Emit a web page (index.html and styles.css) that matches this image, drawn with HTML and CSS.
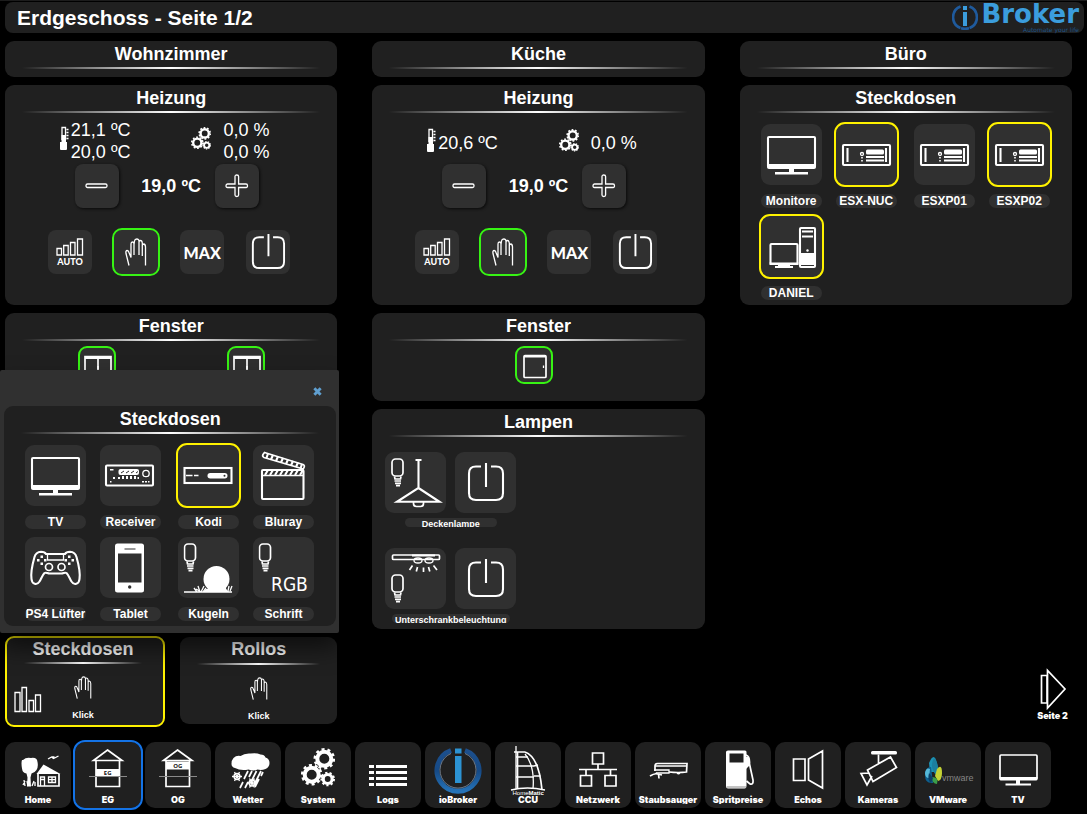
FILE: index.html
```html
<!DOCTYPE html>
<html lang="de">
<head>
<meta charset="utf-8">
<meta name="viewport" content="width=device-width, initial-scale=1">
<title>Erdgeschoss - Seite 1/2</title>
<link rel="stylesheet" href="styles.css">
</head>
<body>
<svg class="sprite" aria-hidden="true">
  <defs>
    <linearGradient id="ring" x1="0" y1="0" x2="0" y2="1"><stop offset="0" stop-color="#1c4f8c"/><stop offset=".5" stop-color="#164a86"/><stop offset="1" stop-color="#2573b8"/></linearGradient>
    <symbol id="tv" viewBox="0 0 61 61"><rect x="7" y="13" width="47" height="30" rx="1" class="l2"/><path class="f" d="M6 40h49v3q0 2-2 2H8q-2 0-2-2zM28 44h5v5h-5zM14 48h33v2.600H14z"/></symbol>
    <symbol id="server" viewBox="0 0 61 61"><rect x="7" y="21" width="47" height="20" rx="1" class="l2"/><path class="l2" d="M11.500 24v14M50 24v14"/><circle cx="26" cy="30" r="1.500" class="l1"/><path class="f" d="M25.200 33h1.600v1.600h-1.600zM25.200 36h1.600v1.600h-1.600z"/><rect class="f" x="30" y="25.500" width="18" height="5" rx="1.500"/><path class="f" d="M30 32h18v2H30zM30 35.500h18v2H30z"/></symbol>
    <symbol id="pc" viewBox="0 0 61 61"><rect x="9.500" y="28" width="27" height="20" rx="1" class="l2"/><path class="f" d="M8.500 46.500h29v2.500h-29zM17 49h12v1h3v2H14v-2h3z"/><rect x="39" y="12" width="15" height="39" rx="1" class="l2"/><path class="l2" d="M41 15.500h11M41 20.500h11"/><circle class="f" cx="46.500" cy="34.500" r="1.200"/><path class="f" d="M40 37h13v12H40z"/></symbol>
    <symbol id="receiver" viewBox="0 0 61 61"><rect x="6" y="20.500" width="47" height="20" rx="1" class="l2"/><rect class="f" x="18.500" y="24" width="20.500" height="6" rx="2"/><path class="d1" d="M21 28l3-2M26 28l3-2M31 28l3-2M36 28l2-1.500"/><circle cx="46" cy="28.500" r="3.200" class="l1"/><path class="f" d="M10 24h3.500v1.500H10zM13 32h2v2h-2zM18 32h2v2h-2zM22 31h2v3h-2zM26 31h2v3h-2zM30 31h2v3h-2zM34 31h2v3h-2zM37.500 32h1.500v2h-1.500zM10 36h1.500v1.500H10zM42 36h2v1.500h-2zM45 36h2v1.500h-2zM48 36h1.500v1.500H48z"/></symbol>
    <symbol id="kodi" viewBox="0 0 61 61"><rect x="6.500" y="23" width="47" height="15" class="l2"/><path class="l15" d="M8 30.500h6.500M16 30.500h4.500"/><rect class="f" x="29.500" y="28" width="20" height="5.500" rx="2.700"/><circle cx="46.500" cy="30.700" r="1" fill="#303030"/></symbol>
    <symbol id="clapper" viewBox="0 0 61 61"><rect x="9" y="25" width="41.500" height="29" rx="1" class="l2"/><path class="l15" d="M10 30.500h40"/><path class="l2" d="M12 30l3-5M17 30l3-5M22 30l3-5M27 30l3-5M32 30l3-5M37 30l3-5M42 30l3-5M47 30l3-5"/><path class="l15" d="M11.500 7.500 50 19.500q2 1 1 3l-.7 1.500L11 12.500q-2-1-1-3z"/><path class="l2" d="M15 8.500 13.500 13M20 10l-2 4.500M25 11.500 23 16M30 13l-2 4.500M35 14.500 33 19M40 16l-2 4.500M45 17.500 43 22M49 19l-1.500 4.500"/></symbol>
    <symbol id="pad" viewBox="0 0 61 61"><path class="l2" d="M16 14.800C12 15 10.500 16.500 9.500 20 7.500 27 5.500 35 6.500 42c.5 5.500 5.500 6.500 8 2.500 2-3.500 3-6.500 5-8.500 1.500-1 3 .5 5 .5h12c2 0 3.500-1.500 5-.5 2 2 3 5 5 8.500 2.500 4 7.500 3 8-2.500 1-7-1-15-3-22-1-3.500-2.500-5-6.500-5.200-2 0-4 .2-5 2.200H21c-1-2-3-2.200-5-2.200z"/><path class="l1" d="M22.500 17v6h16v-6"/><circle cx="24" cy="30" r="3.500" class="l15"/><circle cx="36.500" cy="30" r="3.500" class="l15"/><path class="f" d="M15.500 18.500h2.500v2.500h-2.500zM12 22h2.500v2.500H12zM19 22h2.500v2.500H19zM15.500 25.500h2.500v2.500h-2.500zM43 18.500h2.500v2.500H43zM39.500 22h2.500v2.500h-2.500zM46.500 22h2.500v2.500h-2.500zM43 25.500h2.500v2.500H43z"/></symbol>
    <symbol id="tablet" viewBox="0 0 61 61"><rect class="f" x="15" y="6.500" width="29" height="49" rx="2.500"/><path fill="#303030" d="M18 16.500h23.500v29H18zM24.500 11.500h11v1h-11z"/><circle cx="29.700" cy="50" r="1.700" fill="#303030"/></symbol>
    <symbol id="bulb" viewBox="0 0 14 30"><rect x="1" y="1" width="11" height="17" rx="3.500" class="l15"/><path class="l15" d="M3.500 18.500 4 21h5.500l.5-2.500M3.500 23h6.500M4 25.300h6M5 27.600h4"/></symbol>
    <symbol id="sphere" viewBox="0 0 61 61"><use href="#bulb" x="5.500" y="6" width="14" height="30"/><circle class="f" cx="38.500" cy="42" r="13"/><path class="l1" d="M6 55h48M16 51l3 4M20 49l2 6M26 49l-3 6M28 51l-3 4M18 52l5 3M50 54l1-5M52 54l2-5M48 54l-1-4"/><path class="f" d="M28 52h20l3 3H25z"/></symbol>
    <symbol id="rgb" viewBox="0 0 61 61"><use href="#bulb" x="5.500" y="6" width="14" height="30"/><text x="18" y="54" class="rgb-text">RGB</text></symbol>
    <symbol id="pendant" viewBox="0 0 61 61"><use href="#bulb" x="6" y="6" width="14" height="30"/><path class="l2" d="M30.500 8h6M33.500 8v28L12 49.800h42.500L33.500 36"/><path class="l15" d="M28.500 50v1.500q0 3 3 3h4q3 0 3-3V50"/></symbol>
    <symbol id="cabinet" viewBox="0 0 61 61"><rect x="7.500" y="7" width="47" height="4.500" rx="1" class="l15"/><path class="f" d="M27 6.500h23v2H27z"/><ellipse cx="33" cy="12.500" rx="4" ry="2.500" class="l1"/><ellipse cx="44" cy="12.500" rx="4" ry="2.500" class="l1"/><path class="l15" d="M27.500 17.500l-3 4.500M32.500 19l-1.200 4.500M38.500 19.500V24M43.500 19l1.300 4.500M48.500 17.500l3.500 4.500"/><use href="#bulb" x="6" y="26" width="14" height="30"/></symbol>
    <symbol id="power" viewBox="0 0 61 61"><path class="l2" d="M26 14.500h-5q-7 0-7 7V41q0 7 7 7h20q7 0 7-7V21.500q0-7-7-7h-5M31 11v24"/></symbol>
    <symbol id="hand" viewBox="0 0 22 28"><path class="l1" d="M4 27.500 1 15.500q-.5-3 1.200-3 1.300 0 2 2.500L6 19.500V6q0-2 1.500-2T9 6v11M9 6.500 9.500 3q.3-2 2.300-2T14 3v14M14 4.500q0-2 1.500-2T17.300 5v13M17.300 8q0-2 1.400-2 1.800.3 1.800 3v18.500"/></symbol>
    <symbol id="minus" viewBox="0 0 24 24"><rect x="1" y="10" width="21" height="3.500" rx="1.500" class="l1"/></symbol>
    <symbol id="plus" viewBox="0 0 24 24"><path class="l1" d="M10 10V2.500q0-1.500 1.800-1.500t1.800 1.500V10H21q1.500 0 1.500 1.800T21 13.500h-7.400V21q0 1.500-1.800 1.500T10 21v-7.500H2.500Q1 13.500 1 11.800T2.500 10z"/></symbol>
    <symbol id="auto" viewBox="0 0 44 44"><path class="l1" d="M9 18.500h4.500V25H9zM15.700 15.500h4.500V25h-4.500zM22.500 12.500h4.500V25h-4.500zM29.500 9h5v16h-5z"/><text x="22" y="35" class="auto-text">AUTO</text></symbol>
    <symbol id="thermo" viewBox="0 0 9 24"><path class="l1" d="M2 14V1.500h3.500V14M6.500 3.500h2M6.500 6.500h2M6.500 9.500h2M6.500 12.500h2"/><path class="f" d="M1.500 9h4.500v7h1v7q0 1-1 1H1q-1 0-1-1v-7h1.500z"/></symbol>
    <symbol id="gears" viewBox="0 0 34 39"><g class="gear"><circle cx="23.300" cy="10.800" r="7" stroke-width="4"/><circle cx="23.300" cy="10.800" r="9.500" stroke-width="2.600" stroke-dasharray="2.980"/><circle cx="10.700" cy="26.700" r="7" stroke-width="4"/><circle cx="10.700" cy="26.700" r="9.500" stroke-width="2.600" stroke-dasharray="2.980"/><circle cx="26.700" cy="31" r="4.500" stroke-width="3.200"/><circle cx="26.700" cy="31" r="6.300" stroke-width="2" stroke-dasharray="2.200"/></g></symbol>
    <symbol id="win1" viewBox="0 0 34 34"><rect x="7" y="7.500" width="22" height="22" rx="1" class="l15"/><path class="f" d="M7 7h22v2.500H7z"/><path class="l1" d="M26.500 17.500v2.500"/></symbol>
    <symbol id="win2" viewBox="0 0 34 34"><path class="l15" d="M5 29.500V8.500h26v21zM18 10v19"/><path class="f" d="M5 8h26v3H5zM17 18h2v3h-2z"/></symbol>
    <symbol id="bars" viewBox="0 0 28 27"><path class="l1" d="M1 6.500h5V25.500H1zM8 1.500h4.500v24H8zM15 14.500h4.500v11H15zM21.500 9h5v16.500h-5z"/></symbol>
    <symbol id="n-home" viewBox="0 0 66 53"><path class="f" d="M18 18q3-3 8-2 6-1 6.500 4 1 5-1 8-2 3-5 3.500l-1 4 .5 9h-4l.5-9-1-4q-4-.5-4.500-5-1-6 0-8.500z"/><path class="l1" d="M18 43l2-4M20 44l-1-6M23 44l-1-5M27 44l2-5M30 44v-4"/><path class="f" d="M31.500 32 38.500 22.500 55.500 32z"/><path class="l15" d="M33 31.500v12.500h21V32"/><path class="l1" d="M35.500 44v-9h4v9M36 37.500h3M43.500 35h7v5.500h-7zM47 35v5.500M43.500 37.700h7M43 17l3.500-2 2 1.500 5-2.500M46.500 15h3"/></symbol>
    <symbol id="n-eg" viewBox="0 0 66 53"><path class="l15" d="M32.500 8 47 18.500H18.500zM21 18.500v26h23.500v-26"/><path class="f" d="M21 27h23.500v7.500H21z"/><path class="g1" d="M14 34.500h38"/><text x="32.700" y="33.300" class="floor-text">EG</text></symbol>
    <symbol id="n-og" viewBox="0 0 66 53"><path class="l15" d="M32.500 8 47 18.500H18.500zM21 18.500v26h23.500v-26"/><path class="f" d="M21 19.500h23.500v8H21z"/><path class="g1" d="M14 34.500h38"/><text x="32.700" y="26" class="floor-text">OG</text></symbol>
    <symbol id="n-wetter" viewBox="0 0 66 53"><path class="f" d="M20 26q-3.500-1-3.500-4 0-4 2-6 3-3 7-2 4-3 10-2.500 6-1 10 1 4 0 5 3 4 1 4 5.500 0 4-4 6-4 1.500-8 .5-4 2-9 0-8 1.500-13.500-1.500z"/><path class="l15" d="M33 29l-4 8M37 29l-3 6M41.500 29l-6 12M46 29l-7 14M44 37l-4 8M28 40l-3 6M33 40l-3 6M48 30l-2 4"/><g class="l1"><circle cx="22" cy="34.500" r="3"/><path d="M17 34.500h10M19.500 30l5 9M24.500 30l-5 9"/><circle cx="37" cy="41" r="3"/><path d="M32 41h10M34.500 36.500l5 9M39.500 36.500l-5 9"/></g></symbol>
    <symbol id="n-system" viewBox="0 0 66 53"><use href="#gears" x="16" y="6" width="34" height="39"/></symbol>
    <symbol id="n-logs" viewBox="0 0 66 53"><path class="f" d="M14 23h5v3h-5zM14 29h5v3h-5zM14 35h5v3h-5zM14 41h5v3h-5zM21 23h31v3H21zM21 29h31v3H21zM21 35h31v3H21zM21 41h31v3H21z"/></symbol>
    <symbol id="n-iobroker" viewBox="0 0 66 53"><path fill="none" stroke="url(#ring)" stroke-width="5" d="M26 8.500a21 21 0 1 0 14 0"/><path fill="none" stroke="#9fb4cc" stroke-width=".6" d="M40 11.500a18 18 0 1 1-14 0"/><path fill="#2c93d3" d="M30 6.500h6.500v5H30zM30 14h6.500v27H30z"/></symbol>
    <symbol id="n-ccu" viewBox="0 0 66 53"><path class="l1" d="M21 4v43M19 10h11M21 15h12M21 24h18M21 35h18M16 48q16-4 34 0"/><path class="l15" d="M30 10q14 5 17 38M22.500 10v37"/><path class="l1" d="M30 12q10 12 8 35M43 23l-4 1M45.500 34H39"/><text x="17.500" y="52.500" class="ccu-text">Home<tspan font-weight="700">Matic</tspan></text></symbol>
    <symbol id="n-netz" viewBox="0 0 66 53"><path class="l15" d="M27.500 11h11v11h-11zM15.500 33.500h11v10.500h-11zM40 33.500h11v10.500H40zM33 22v5M14 27.500h38M21 28v5M45.500 28v5"/></symbol>
    <symbol id="n-staub" viewBox="0 0 66 53"><path class="l15" d="M20 29v-5q0-2.500 2.500-2.500H52L51.500 30q-8 1-17.500 0"/><path class="l1" d="M20 24h31.500M19 28h15v3H21M42 31q1.500 1.500 3 0"/><path class="l15" d="M15 34q3-2 7-2.500M20 31.500l7 1.500M23.500 32l.5 4.500"/></symbol>
    <symbol id="n-fuel" viewBox="0 0 66 53"><path class="f" fill-rule="evenodd" d="M23 8.500h17q1.500 0 1.500 1.500v34q0 2.500-2 2.500H23q-2 0-2-2.500V10q0-1.500 2-1.500zM24.500 11.500v9h14v-9z"/><path fill="none" stroke="#888" d="M22 45h19"/><path class="l15" d="M41 13q4 1 3.500 9L48 38q.5 5-3 4l-3.500-3"/><path class="f" d="M41 15h3l1 8-4 4z"/></symbol>
    <symbol id="n-echo" viewBox="0 0 66 53"><path class="l15" d="M18.500 17H30v21.500H18.500zM33.500 17l14-8v37l-14-8z"/></symbol>
    <symbol id="n-cam" viewBox="0 0 66 53"><rect class="f" x="26" y="9" width="26" height="3.500" rx="1.500"/><path class="l15" d="M33.500 12.500V21M22.500 28 45.500 15l6 10.500-23.500 14zM27 34l-5 9-6-11.500 8-.5"/></symbol>
    <symbol id="n-vm" viewBox="0 0 66 53"><path fill="#1c93b5" d="M14 21q5-12 8 0l-1 9h-6z"/><path fill="#0d5f8e" d="M10 33q0-8 6-8l2 16q-8 1-8-8z"/><path fill="#55b8d8" d="M10 31q1-6 5-4l-1 9q-4 0-4-5z"/><path fill="#1c7fa0" d="M19 16q7 8 2 17-7-8-2-17z"/><path fill="#c4d335" d="M22 27q5-6 5 4 0 7-4 8l-3-5z"/><path fill="#3b9e4b" d="M17 35q7 0 5 7-5 0-5-7z"/><path fill="#0c3f66" d="M14 31l4 5-2 5q-4-3-2-10z"/><text x="27" y="39" class="vm-text">vmware</text></symbol>
    <symbol id="n-tv" viewBox="0 0 66 53"><rect x="15" y="13" width="37" height="24" rx="1" class="l15"/><path class="f" d="M14.500 35h38v2q0 1.500-1.500 1.500H16q-1.500 0-1.500-1.500zM31 38h4v3.500h-4zM20.500 41.500H46v2H20.500z"/></symbol>
    <symbol id="next" viewBox="0 0 61 49"><path class="l15" d="M19.500 13.500H25V41h-5.500zM25.500 8.500v37.500L43 27z"/></symbol>
    <symbol id="close" viewBox="0 0 10 10"><path fill="none" stroke="#5f9fd0" stroke-width="3.200" d="M1.500 1.500l7 7M8.500 1.500l-7 7"/></symbol>
    <symbol id="logo" viewBox="0 0 26 26"><path fill="none" stroke="#1f5a9c" stroke-width="2.600" d="M8.500 2.500a11.500 11.500 0 0 0 0 21.500M17.500 2.500a11.500 11.500 0 0 1 0 21.500M9 24.200q4 1 8 0"/><path fill="#3b9ddd" d="M11 2h4v4h-4zM11 8h4v14h-4z"/></symbol>
  </defs>
</svg>

<header class="topbar">
  <h1 class="page-title">Erdgeschoss - Seite 1/2</h1>
  <div class="logo">
    <svg class="logo-mark" aria-hidden="true"><use href="#logo"/></svg>
    <div class="logo-words"><span class="logo-name">Broker</span><span class="logo-tag">Automate your life</span></div>
  </div>
</header>

<main class="rooms">
  <section class="room">
    <div class="panel panel-room"><h2 class="title">Wohnzimmer</h2></div>
    <div class="panel panel-tall">
      <h3 class="title">Heizung</h3>
      <div class="readings">
        <div class="reading"><svg class="thermo" aria-hidden="true"><use href="#thermo"/></svg><div>21,1 ºC<br>20,0 ºC</div></div>
        <div class="reading reading-valve"><svg class="valve" aria-hidden="true"><use href="#gears"/></svg><div>0,0 %<br>0,0 %</div></div>
      </div>
      <div class="stepper">
        <button class="step" aria-label="Kälter"><svg class="step-icon"><use href="#minus"/></svg></button>
        <output class="target">19,0 ºC</output>
        <button class="step" aria-label="Wärmer"><svg class="step-icon"><use href="#plus"/></svg></button>
      </div>
      <div class="modes">
        <button class="mode" aria-label="Auto"><svg class="mode-auto"><use href="#auto"/></svg></button>
        <button class="mode is-green" aria-label="Manuell"><svg class="mode-hand"><use href="#hand"/></svg></button>
        <button class="mode mode-max">MAX</button>
        <button class="mode" aria-label="Aus"><svg class="mode-power"><use href="#power"/></svg></button>
      </div>
    </div>
    <div class="panel panel-window">
      <h3 class="title">Fenster</h3>
      <div class="windows windows-pair">
        <button class="window" aria-label="Fenster links"><svg class="window-icon"><use href="#win2"/></svg></button>
        <button class="window" aria-label="Fenster rechts"><svg class="window-icon"><use href="#win2"/></svg></button>
      </div>
    </div>
    <div class="shortcuts">
      <button class="shortcut shortcut-open">
        <span class="title">Steckdosen</span>
        <span class="shortcut-body"><svg class="shortcut-bars"><use href="#bars"/></svg><span class="shortcut-click"><svg class="shortcut-hand"><use href="#hand"/></svg>Klick</span></span>
      </button>
      <button class="shortcut">
        <span class="title">Rollos</span>
        <span class="shortcut-body"><span class="shortcut-click"><svg class="shortcut-hand"><use href="#hand"/></svg>Klick</span></span>
      </button>
    </div>
    <div class="popup" role="dialog" aria-label="Steckdosen">
      <div class="popup-bar"><button class="popup-close" aria-label="Schließen"><svg class="close-icon"><use href="#close"/></svg></button></div>
      <div class="panel panel-tall">
        <h3 class="title">Steckdosen</h3>
        <div class="tiles">
          <button class="device"><svg class="tile"><use href="#tv"/></svg><span class="pill">TV</span></button>
          <button class="device"><svg class="tile"><use href="#receiver"/></svg><span class="pill">Receiver</span></button>
          <button class="device"><svg class="tile is-yellow"><use href="#kodi"/></svg><span class="pill">Kodi</span></button>
          <button class="device"><svg class="tile"><use href="#clapper"/></svg><span class="pill">Bluray</span></button>
          <button class="device"><svg class="tile"><use href="#pad"/></svg><span class="pill">PS4 Lüfter</span></button>
          <button class="device"><svg class="tile"><use href="#tablet"/></svg><span class="pill">Tablet</span></button>
          <button class="device"><svg class="tile"><use href="#sphere"/></svg><span class="pill">Kugeln</span></button>
          <button class="device"><svg class="tile"><use href="#rgb"/></svg><span class="pill">Schrift</span></button>
        </div>
      </div>
    </div>
  </section>

  <section class="room">
    <div class="panel panel-room"><h2 class="title">Küche</h2></div>
    <div class="panel panel-tall">
      <h3 class="title">Heizung</h3>
      <div class="readings readings-single">
        <div class="reading"><svg class="thermo" aria-hidden="true"><use href="#thermo"/></svg><div>20,6 ºC</div></div>
        <div class="reading reading-valve"><svg class="valve" aria-hidden="true"><use href="#gears"/></svg><div>0,0 %</div></div>
      </div>
      <div class="stepper">
        <button class="step" aria-label="Kälter"><svg class="step-icon"><use href="#minus"/></svg></button>
        <output class="target">19,0 ºC</output>
        <button class="step" aria-label="Wärmer"><svg class="step-icon"><use href="#plus"/></svg></button>
      </div>
      <div class="modes">
        <button class="mode" aria-label="Auto"><svg class="mode-auto"><use href="#auto"/></svg></button>
        <button class="mode is-green" aria-label="Manuell"><svg class="mode-hand"><use href="#hand"/></svg></button>
        <button class="mode mode-max">MAX</button>
        <button class="mode" aria-label="Aus"><svg class="mode-power"><use href="#power"/></svg></button>
      </div>
    </div>
    <div class="panel panel-window">
      <h3 class="title">Fenster</h3>
      <div class="windows">
        <button class="window" aria-label="Fenster"><svg class="window-icon"><use href="#win1"/></svg></button>
      </div>
    </div>
    <div class="panel panel-tall">
      <h3 class="title">Lampen</h3>
      <div class="lamps">
        <div class="lamp">
          <div class="lamp-tiles"><svg class="tile" aria-hidden="true"><use href="#pendant"/></svg><button class="device" aria-label="Deckenlampe schalten"><svg class="tile"><use href="#power"/></svg></button></div>
          <span class="lamp-name">Deckenlampe</span>
        </div>
        <div class="lamp">
          <div class="lamp-tiles"><svg class="tile" aria-hidden="true"><use href="#cabinet"/></svg><button class="device" aria-label="Unterschrankbeleuchtung schalten"><svg class="tile"><use href="#power"/></svg></button></div>
          <span class="lamp-name lamp-name-wide">Unterschrankbeleuchtung</span>
        </div>
      </div>
    </div>
  </section>

  <section class="room">
    <div class="panel panel-room"><h2 class="title">Büro</h2></div>
    <div class="panel panel-tall">
      <h3 class="title">Steckdosen</h3>
      <div class="tiles">
        <button class="device"><svg class="tile"><use href="#tv"/></svg><span class="pill">Monitore</span></button>
        <button class="device"><svg class="tile is-yellow"><use href="#server"/></svg><span class="pill">ESX-NUC</span></button>
        <button class="device"><svg class="tile"><use href="#server"/></svg><span class="pill">ESXP01</span></button>
        <button class="device"><svg class="tile is-yellow"><use href="#server"/></svg><span class="pill">ESXP02</span></button>
        <button class="device"><svg class="tile is-yellow"><use href="#pc"/></svg><span class="pill">DANIEL</span></button>
      </div>
    </div>
    <a class="next-page" href="#seite2"><svg class="next-icon" aria-hidden="true"><use href="#next"/></svg><span class="nav-label">Seite 2</span></a>
  </section>
</main>

<nav class="nav">
  <a class="nav-item" href="#home"><svg class="nav-icon"><use href="#n-home"/></svg><span class="nav-label">Home</span></a>
  <a class="nav-item is-current" href="#eg" aria-current="page"><svg class="nav-icon"><use href="#n-eg"/></svg><span class="nav-label">EG</span></a>
  <a class="nav-item" href="#og"><svg class="nav-icon"><use href="#n-og"/></svg><span class="nav-label">OG</span></a>
  <a class="nav-item" href="#wetter"><svg class="nav-icon"><use href="#n-wetter"/></svg><span class="nav-label">Wetter</span></a>
  <a class="nav-item" href="#system"><svg class="nav-icon"><use href="#n-system"/></svg><span class="nav-label">System</span></a>
  <a class="nav-item" href="#logs"><svg class="nav-icon"><use href="#n-logs"/></svg><span class="nav-label">Logs</span></a>
  <a class="nav-item" href="#iobroker"><svg class="nav-icon"><use href="#n-iobroker"/></svg><span class="nav-label">ioBroker</span></a>
  <a class="nav-item" href="#ccu"><svg class="nav-icon"><use href="#n-ccu"/></svg><span class="nav-label">CCU</span></a>
  <a class="nav-item" href="#netzwerk"><svg class="nav-icon"><use href="#n-netz"/></svg><span class="nav-label">Netzwerk</span></a>
  <a class="nav-item" href="#staubsauger"><svg class="nav-icon"><use href="#n-staub"/></svg><span class="nav-label">Staubsauger</span></a>
  <a class="nav-item" href="#spritpreise"><svg class="nav-icon"><use href="#n-fuel"/></svg><span class="nav-label">Spritpreise</span></a>
  <a class="nav-item" href="#echos"><svg class="nav-icon"><use href="#n-echo"/></svg><span class="nav-label">Echos</span></a>
  <a class="nav-item" href="#kameras"><svg class="nav-icon"><use href="#n-cam"/></svg><span class="nav-label">Kameras</span></a>
  <a class="nav-item" href="#vmware"><svg class="nav-icon"><use href="#n-vm"/></svg><span class="nav-label">VMware</span></a>
  <a class="nav-item" href="#tv-page"><svg class="nav-icon"><use href="#n-tv"/></svg><span class="nav-label">TV</span></a>
</nav>
</body>
</html>
```
FILE: styles.css
```css
*, *::before, *::after { box-sizing: border-box; }

body {
  margin: 0;
  min-height: 100vh;
  display: flex;
  flex-direction: column;
  padding: 1px 3px 6px 5px;
  border-top: 1px solid #1c1c1c;
  background: #000;
  color: #fff;
  font-family: "Liberation Sans", Arial, sans-serif;
  font-size: 18px;
}

button {
  margin: 0;
  padding: 0;
  border: 0;
  background: none;
  color: inherit;
  font: inherit;
  cursor: pointer;
}

svg { display: block; flex: none; }
.sprite { position: absolute; width: 0; height: 0; }

/* icon strokes and fills */
.l1, .l15, .l2 { fill: none; stroke: #fff; }
.l1 { stroke-width: 1.3; }
.l15 { stroke-width: 1.7; }
.l2 { stroke-width: 2.1; }
.g1 { fill: none; stroke: #8a8a8a; }
.d1 { fill: none; stroke: #303030; }
.f { fill: #fff; }
.gear { fill: none; stroke: #fff; }
.rgb-text { fill: #fff; font: 19px "DejaVu Sans Condensed", "Noto Sans", sans-serif; }
.auto-text { fill: #fff; font: 900 9px Lato, sans-serif; text-anchor: middle; }
.floor-text { fill: #111; font: 700 6px "Open Sans", sans-serif; text-anchor: middle; }
.ccu-text { fill: #fff; font: 6px "Liberation Sans", sans-serif; }
.vm-text { fill: #858585; font: 9px "Liberation Sans", sans-serif; }

/* header */
.topbar {
  display: flex;
  justify-content: space-between;
  height: 31px;
  padding: 0 5px 0 12px;
  border-radius: 8px;
  background: #202020;
}
.page-title { margin: 0; font-size: 21px; line-height: 31px; }
.logo { display: flex; gap: 3px; }
.logo-mark { width: 26px; height: 26px; margin-top: 2px; }
.logo-words { display: flex; flex-direction: column; align-items: flex-end; }
.logo-name {
  color: #3b9ddd;
  font: 700 26px/24px "DejaVu Sans", sans-serif;
}
.logo-tag { color: #1d5488; font: 6px/7px "DejaVu Sans", sans-serif; }

/* columns */
.rooms {
  flex: 1;
  display: grid;
  grid-template-columns: repeat(3, 1fr);
  gap: 35px;
  margin-top: 8px;
  padding-right: 12px;
}
.room { position: relative; display: flex; flex-direction: column; gap: 8px; }
.panel { border-radius: 9px; background: #202020; }
.panel-room { min-height: 36px; }
.panel-tall { min-height: 220px; }
.panel-window { min-height: 88px; }

.title {
  display: block;
  margin: 0 17px;
  height: 28px;
  font-size: 18px;
  font-weight: 700;
  line-height: 26px;
  text-align: center;
  background: linear-gradient(90deg, transparent, #fff 50%, transparent) bottom / 100% 2px no-repeat;
}

/* heating */
.readings {
  display: flex;
  justify-content: center;
  gap: 61px;
  min-height: 50px;
  padding: 6px 13px 0 0;
  line-height: 22px;
}
.readings-single { padding-top: 10px; }
.reading { display: flex; align-items: center; gap: 2px; }
.reading-valve { gap: 12px; }
.thermo { width: 9px; height: 24px; margin-bottom: 6px; }
.valve { width: 20px; height: 23px; margin-bottom: 6px; }
.stepper {
  display: flex;
  justify-content: center;
  margin-top: 1px;
  padding-right: 9px;
}
.step {
  display: grid;
  place-items: center;
  width: 44px;
  height: 44px;
  border-radius: 8px;
  background: #303030;
  box-shadow: 1px 1px 3px #0a0a0a;
}
.step-icon { width: 24px; height: 24px; }
.target {
  width: 96px;
  padding-left: 9px;
  font-weight: 700;
  line-height: 44px;
  text-align: center;
}
.modes {
  display: flex;
  justify-content: center;
  gap: 22px;
  margin-top: 22px;
  padding-right: 4px;
}
.mode {
  display: grid;
  place-content: center;
  width: 44px;
  height: 44px;
  border-radius: 8px;
  background: #303030;
}
.is-green { outline: 2px solid #37f314; }
.mode-auto { width: 44px; height: 44px; }
.mode-hand { width: 22px; height: 28px; }
.mode-power { width: 56px; height: 56px; }
.mode-max { font: 900 16px Lato, sans-serif; }

/* windows */
.windows { display: flex; justify-content: center; padding: 5px 9px 0 0; }
.windows-pair { gap: 111px; padding-right: 0; }
.window {
  width: 38px;
  height: 38px;
  border: 2px solid #37f314;
  border-radius: 9px;
  background: #303030;
}
.window-icon { width: 34px; height: 34px; }

/* device tiles */
.tiles {
  display: grid;
  grid-template-columns: 75px 78px 75px 61px;
  row-gap: 8px;
  padding: 11px 0 0 21px;
}
.device {
  display: flex;
  flex-direction: column;
  gap: 9px;
  width: 61px;
}
.tile { width: 61px; height: 61px; border-radius: 9px; background: #303030; }
.is-yellow { outline: 2px solid #fff200; }
.pill {
  width: 61px;
  height: 14px;
  overflow: hidden;
  border-radius: 7px;
  background: #303030;
  font-size: 12px;
  font-weight: 700;
  line-height: 15px;
  text-align: center;
  white-space: nowrap;
}

/* lamps */
.lamps {
  display: flex;
  flex-direction: column;
  align-items: flex-start;
  gap: 21px;
  padding: 15px 0 0 13px;
}
.lamp { display: flex; flex-direction: column; align-items: center; gap: 5px; }
.lamp-tiles { display: flex; gap: 9px; }
.lamp-name {
  width: 92px;
  height: 9px;
  overflow: hidden;
  border-radius: 5px;
  background: #303030;
  font-size: 9px;
  font-weight: 700;
  line-height: 12px;
  text-align: center;
}
.lamp-name-wide { width: 118px; }

/* shortcuts under the popup */
.shortcuts { display: flex; align-items: flex-start; gap: 15px; margin-top: auto; }
.shortcut {
  flex: 1;
  display: flex;
  flex-direction: column;
  height: 87px;
  margin-top: 1px;
  border-radius: 9px;
  background: #202020;
}
.shortcut .title { align-self: stretch; flex: none; line-height: 24px; }
.shortcut-open {
  flex: none;
  width: 160px;
  height: 91px;
  margin-top: 0;
  padding-right: 4px;
  border: 2px solid #fff200;
}
.shortcut-open .title { height: 26px; line-height: 22px; }
.shortcut-body {
  flex: 1;
  display: grid;
  grid-template-columns: 1fr auto 1fr;
  align-items: start;
  align-self: stretch;
}
.shortcut-bars { width: 28px; height: 27px; margin: 22px 0 0 7px; }
.shortcut-click {
  grid-column: 2;
  display: flex;
  flex-direction: column;
  align-items: center;
  gap: 10px;
  padding-top: 12px;
  font-size: 9px;
  font-weight: 700;
  line-height: 12px;
}
.shortcut-hand { width: 18px; height: 23px; }

/* popup */
.popup {
  position: absolute;
  top: 329px;
  left: -5px;
  right: -2px;
  padding: 0 3px 7px 4px;
  border-radius: 2px;
  background: #303030;
  box-shadow: 0 14px 24px rgba(0, 0, 0, .6);
}
.popup-bar { display: flex; justify-content: flex-end; height: 36px; padding: 16px 13px 0 0; }
.popup-close { width: 10px; height: 10px; }
.close-icon { width: 9px; height: 9px; }

/* next page */
.next-page {
  align-self: flex-end;
  width: 61px;
  height: 61px;
  margin: auto -11px 4px 0;
  color: #fff;
  text-decoration: none;
}
.next-icon { width: 61px; height: 49px; }

/* bottom navigation */
.nav { display: flex; gap: 4px; margin-top: 15px; }
.nav-item {
  width: 66px;
  height: 66px;
  border-radius: 10px;
  background: #202020;
  color: #fff;
  text-decoration: none;
}
.is-current { outline: 2px solid #1473e6; }
.nav-icon { width: 66px; height: 53px; }
.nav-label {
  display: block;
  height: 9px;
  overflow: hidden;
  font: 900 9px/9px Inter, sans-serif;
  text-align: center;
}
```
